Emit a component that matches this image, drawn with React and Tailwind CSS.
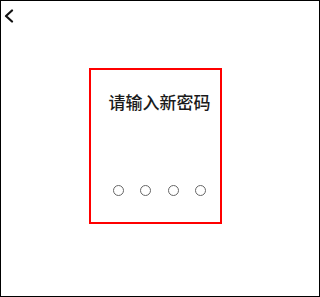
const dots = [0, 1, 2, 3];

export default function App() {
  return (
    <div
      className="relative flex h-[297px] w-[320px] flex-col border border-black bg-white"
      style={{ fontFamily: '"Noto Sans CJK SC", "Noto Sans", sans-serif' }}
    >
      <div className="pl-[2px] pt-[8px]">
        <svg width="12" height="14" viewBox="0 0 12 14" className="block">
          <path d="M9 1.5 L3 7 L9 12.5" fill="none" stroke="#111" strokeWidth="2.2" strokeLinecap="round" strokeLinejoin="round" />
        </svg>
      </div>

      <div className="ml-[88px] mt-[45px] flex h-[156px] w-[133px] flex-col items-center border-2 border-[#ff0000] pl-[8px]">
        <p className="mt-[22px] text-[17px] font-medium leading-[20px] text-[#1a1a1a]">请输入新密码</p>
        <div className="mt-[73px] flex gap-[16.5px]">
          {dots.map((d) => (
            <span key={d} className="block size-[11px] rounded-full border-[1.5px] border-[#666]" />
          ))}
        </div>
      </div>
    </div>
  );
}
